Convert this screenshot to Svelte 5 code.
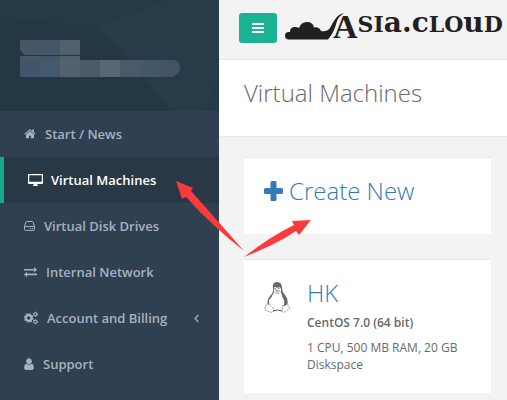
<script lang="ts">
    const menu = [
        { label: "Start / News", icon: "home", width: 12 },
        { label: "Virtual Machines", icon: "desktop", width: 15, active: true },
        { label: "Virtual Disk Drives", icon: "disk", width: 11 },
        { label: "Internal Network", icon: "exchange", width: 13 },
        { label: "Account and Billing", icon: "cogs", width: 14, more: true },
        { label: "Support", icon: "user", width: 10 },
    ];

    const machines = [
        {
            name: "HK",
            os: "CentOS 7.0 (64 bit)",
            specs: "1 CPU, 500 MB RAM, 20 GB Diskspace",
        },
    ];

    // redacted account name, one tile per entry
    const nameTiles = ["#465765", "#43566a", "#51606d"];
    const mailTiles = ["#43556a", "#43596e", "#52626f", "#4a5b69", "#566775", "#495a69", "#445869", "#455464"];
</script>

<div class="page">
    <nav class="sidebar">
        <div class="profile">
            <svg class="pattern" viewBox="0 0 219 111" preserveAspectRatio="none" aria-hidden="true">
                <path d="M0 18L98 26L144 78L172 111H0Z" fill="#233744" />
                <path d="M98 26L168 0H219V70L205 111H172L144 78Z" fill="#273b48" />
            </svg>
            <svg class="redacted" width="160" height="37" viewBox="0 0 160 37" aria-hidden="true">
                {#each nameTiles as fill, i}
                    <rect x={i * 20} y="0" width="20" height="15" {fill} />
                    <rect x={i * 20} y="16" width="20" height="4" {fill} />
                {/each}
                {#each mailTiles as fill, i}
                    {#if i < 7}
                        <rect x={i * 20} y="20" width="20" height="17" {fill} />
                    {:else}
                        <path d="M140 20h14q6 2 6 8t-8 9h-12z" {fill} />
                    {/if}
                {/each}
                <path d="M0 10l5 5H0z" fill="#233744" />
            </svg>
        </div>

        <ul>
            {#each menu as item}
                <li class:active={item.active}>
                    <a href="#{item.icon}">
                        <svg width={item.width} height="14" viewBox="0 0 {item.width} 14" aria-hidden="true">
                            {#if item.icon === "home"}
                                <path transform="translate(-.3 .6) scale(.007)" d="M1472 992v480q0 26-19 45t-45 19h-384v-384h-256v384h-384q-26 0-45-19t-19-45v-480q0-1 .5-3t.5-3l575-474 575 474q1 2 1 6zm223-69l-62 74q-8 9-21 11h-3q-13 0-21-7l-692-577-692 577q-12 8-24 7-13-2-21-11l-62-74q-8-10-7-23.5t11-21.5l719-599q32-26 76-26t76 26l244 204v-195q0-14 9-23t23-9h192q14 0 23 9t9 23v408l219 182q10 8 11 21.5t-7 23.5z" />
                            {:else if item.icon === "desktop"}
                                <path fill-rule="evenodd" d="M1 1h13q1 0 1 1v8q0 1-1 1H9.3v1l.9.4v.6H4.8v-.6l.9-.4v-1H1q-1 0-1-1V2q0-1 1-1zm.2 1.2v6.6h12.6V2.2z" />
                            {:else if item.icon === "disk"}
                                <path class="line" d="M.5 7.5L2 2.900q.1-.4.6-.4h5.800q.5 0 .6.4l1.500 4.600v3q0 .9-.9.9H1.400q-.9 0-.9-.9z" />
                                <path class="line" d="M.5 7.500h10" />
                                <path d="M6 9h1.200v1.100H6zM8 9h1.200v1.100H8z" />
                            {:else if item.icon === "exchange"}
                                <path d="M0 4h10V2l3 2.800-3 2.700V5.600H0zM13 8.600H3V6.800L0 9.500l3 2.700v-2h10z" />
                            {:else if item.icon === "cogs"}
                                <circle class="ring" cx="4.7" cy="7" r="2.8" />
                                <circle class="teeth" cx="4.7" cy="7" r="4.1" />
                                <circle class="small-ring" cx="11.4" cy="3.3" r="1.5" />
                                <circle class="small-teeth" cx="11.4" cy="3.3" r="2.2" />
                                <circle class="small-ring" cx="11.4" cy="10.7" r="1.5" />
                                <circle class="small-teeth" cx="11.4" cy="10.7" r="2.2" />
                            {:else}
                                <path transform="translate(-1.7 .4) scale(.0075)" d="M1536 1399q0 109-62.5 187t-150.5 78h-854q-88 0-150.5-78t-62.5-187q0-85 8.5-160.5t31.5-152 58.5-131 94-89 134.5-34.5q131 128 313 128t313-128q76 0 134.5 34.5t94 89 58.5 131 31.5 152 8.5 160.5zm-256-887q0 159-112.5 271.5t-271.5 112.5-271.5-112.5-112.5-271.5 112.5-271.5 271.5-112.5 271.5 112.5 112.5 271.5z" />
                            {/if}
                        </svg>
                        <span>{item.label}</span>
                        {#if item.more}
                            <svg class="more" width="5" height="9" viewBox="0 0 5 9" aria-hidden="true">
                                <path class="chevron" d="M4.3 1L1 4.5L4.3 8" />
                            </svg>
                        {/if}
                    </a>
                </li>
            {/each}
        </ul>
    </nav>

    <main>
        <header>
            <button aria-label="Toggle menu">
                <svg width="12" height="10" viewBox="0 0 12 10" aria-hidden="true">
                    <path d="M0 0h12v2H0zM0 4h12v2H0zM0 8h12v2H0z" />
                </svg>
            </button>
            <a class="logo" href="#start">
                <svg width="60" height="27" viewBox="0 0 60 27" aria-hidden="true">
                    <path d="M4 26.500Q0 26.500 0 22.500Q0 18.500 5 19Q5 14.500 9 14Q12 13.500 14 15Q16 9 22 9Q28 9 29 14.500Q34 13.500 36 18Q42 19 45 15Q48 9 51 5Q54 1 59 0Q54 3 52 8Q49 20 43 26.500Z" />
                </svg>
                <span class="wordmark"><span class="initial">A</span>SI<span class="uncial">a.c</span>LO<span class="uncial">u</span>D</span>
            </a>
        </header>

        <div class="heading">
            <h1>Virtual Machines</h1>
        </div>

        <div class="content">
            <section class="card create">
                <h2>
                    <a href="#create">
                        <svg width="19" height="20" viewBox="0 0 19 20" aria-hidden="true">
                            <path d="M8 0h3q1.500 0 1.500 1.500V7h5q1.500 0 1.500 1.500v3q0 1.500-1.500 1.500h-5v5.500q0 1.500-1.500 1.500H8q-1.500 0-1.500-1.500V13h-5Q0 13 0 11.500v-3Q0 7 1.500 7h5V1.500Q6.500 0 8 0z" />
                        </svg>
                        Create New
                    </a>
                </h2>
            </section>

            {#each machines as machine}
                <section class="card machine">
                    <svg class="tux" width="27" height="31" viewBox="0 0 27 31" aria-hidden="true">
                        <path d="M9 6Q8 0 13 0Q18 0 18 6Q18 10 21 13Q25 18 23 24L19 27H8L4 24Q2 18 7 13Q10 9 9 6Z" fill="#66686a" />
                        <path d="M10 10Q13 14 17 10Q18 15 20 18Q21 24 18 28H9Q4 22 5 18Q8 15 10 10Z" fill="#fff" />
                        <path d="M10 6Q11 4 13 6Q16 4 17 7L17 10Q13 13 10 10Z" fill="#fff" />
                        <path d="M10 8L13 7L17 9L13 11Z" fill="#bbb" />
                        <path d="M11 6v1M15 6v1" stroke="#555" />
                        <path d="M1 24L5 22Q8 24 10 28Q9 31 6 30L1 28ZM19 23Q21 25 23 22L26 26Q24 28 21 30Q18 31 18 28Z" fill="#fff" stroke="#777" stroke-width=".8" stroke-dasharray="2 1" />
                        <path d="M9 29Q14 27 18 29" stroke="#555" fill="none" />
                    </svg>
                    <div>
                        <h2><a href="#machine">{machine.name}</a></h2>
                        <strong>{machine.os}</strong>
                        <p>{machine.specs}</p>
                    </div>
                </section>
            {/each}
        </div>
    </main>

    <svg class="arrows" width="140" height="80" viewBox="0 0 140 80" aria-hidden="true">
        <path d="M3 2L20 9L18 12Q36 32 71 72Q38 46 13 18L9 20Z" />
        <path d="M138 41L119 42L121 46Q98 57 71 78Q104 65 123 52L126 56Z" />
    </svg>
</div>

<style>
    :global(body) {
        margin: 0;
        background: #2f4050;
    }

    .page {
        position: relative;
        display: flex;
        min-height: 100vh;
        overflow: hidden;
        color: #676a6c;
        font: 12px/17px "Open Sans", sans-serif;
    }

    a {
        color: #337ab7;
        text-decoration: none;
    }

    h1,
    h2,
    p,
    ul {
        margin: 0;
        padding: 0;
    }

    h1,
    h2 {
        font-size: 24px;
        line-height: 26px;
        font-weight: 300;
    }

    svg {
        flex: none;
        fill: currentColor;
    }

    .sidebar {
        flex: 0 0 219px;
        background: #2f4050;
    }

    .profile {
        position: relative;
        height: 111px;
        background: #253946;
    }

    .pattern {
        display: block;
        width: 100%;
        height: 100%;
    }

    .redacted {
        position: absolute;
        left: 20px;
        top: 40px;
    }

    ul {
        list-style: none;
    }

    li a {
        display: flex;
        align-items: center;
        gap: 9px;
        height: 46px;
        padding: 0 20px 0 24px;
        color: #a7b1c2;
        font-size: 13px;
        font-weight: 600;
    }

    .active {
        border-left: 4px solid #19aa8d;
        background: #293846;
    }

    .active a {
        gap: 8px;
        color: #fff;
    }

    .more {
        margin-left: auto;
    }

    .line,
    .chevron,
    .ring,
    .teeth,
    .small-ring,
    .small-teeth {
        fill: none;
        stroke: currentColor;
    }

    .chevron {
        stroke-width: 1.3;
    }

    .ring {
        stroke-width: 2.2;
    }

    .teeth {
        stroke-width: 1.4;
        stroke-dasharray: 1.7 1.52;
    }

    .small-ring {
        stroke-width: 1.1;
    }

    .small-teeth {
        stroke-width: 0.9;
        stroke-dasharray: 1.1 1.2;
    }

    main {
        flex: 1;
        min-width: 0;
        background: #f3f3f4;
    }

    header {
        display: flex;
        align-items: flex-start;
        gap: 8px;
        height: 46px;
        padding: 13px 0 0 20px;
        border-bottom: 1px solid #e7eaec;
    }

    button {
        display: flex;
        flex: none;
        align-items: center;
        justify-content: center;
        width: 38px;
        height: 30px;
        padding: 0;
        border: 0;
        border-radius: 3px;
        background: #1ab394;
        color: #fff;
    }

    .logo {
        display: flex;
        color: #231f20;
    }

    .wordmark {
        height: 26px;
        margin-left: -12px;
        font: bold 22px/20px "DejaVu Serif", serif;
        white-space: nowrap;
    }

    .initial {
        font: bold 34px/20px "Liberation Serif", serif;
        vertical-align: -6px;
    }

    .uncial {
        font-size: 28px;
        line-height: 20px;
    }

    .heading {
        padding: 20px 25px 30px;
        border-bottom: 1px solid #e7eaec;
        background: #fff;
    }

    .content {
        display: grid;
        gap: 25px;
        padding: 20px 16px 7px 25px;
    }

    .card {
        border-top: 1px solid #e7eaec;
        background: #fff;
    }

    .create {
        padding: 20px 20px 30px;
    }

    .create a {
        display: flex;
        align-items: center;
        gap: 6px;
    }

    .machine {
        display: flex;
        gap: 16px;
        padding: 20px;
    }

    .machine strong {
        display: block;
        margin: 8px 0;
        font-weight: 600;
    }

    .tux {
        margin-top: 2px;
    }

    .arrows {
        position: absolute;
        left: 173px;
        top: 179px;
        fill: #fb3b3b;
        pointer-events: none;
    }
</style>
